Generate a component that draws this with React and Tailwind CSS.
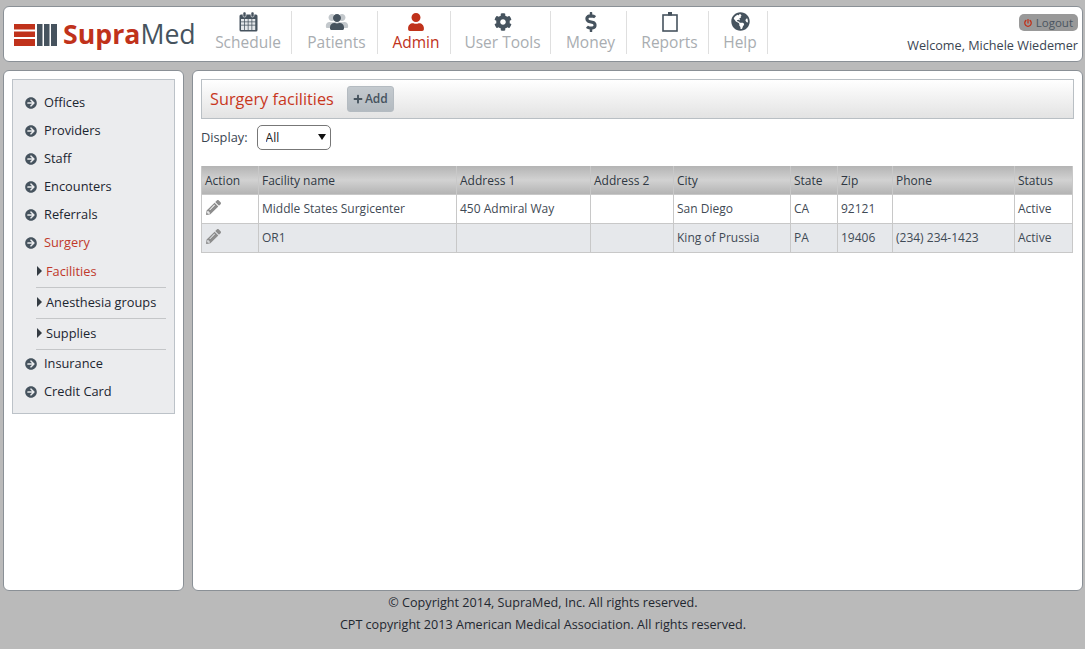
import React from "react";
import {
  FaUser,
  FaCog,
  FaDollarSign,
  FaGlobeAmericas,
  FaArrowCircleRight,
  FaPowerOff,
  FaPencilAlt,
  FaPlus,
} from "react-icons/fa";

const CalendarIcon = () => (
  <svg width="19" height="20" viewBox="0 0 19 20">
    <rect x="0.5" y="2.5" width="18" height="17" rx="1.5" fill="#46535e" />
    <rect x="4" y="0" width="3" height="5" rx="1.2" fill="#46535e" stroke="#fff" strokeWidth="0.6" />
    <rect x="12" y="0" width="3" height="5" rx="1.2" fill="#46535e" stroke="#fff" strokeWidth="0.6" />
    <g fill="#e4e7ea">
      {[7, 10.25, 13.5, 16].map((y) =>
        [2, 5.75, 9.5, 13.25].map((x) => (
          <rect key={`${x}-${y}`} x={x} y={y} width="3" height={y === 16 ? 2 : 2.5} />
        ))
      )}
    </g>
  </svg>
);

const PatientsIcon = () => (
  <span className="relative block w-[24px] h-[19px]">
    <FaUser className="absolute left-0 top-[2px] text-[14px] text-[#c3c8cc]" />
    <FaUser className="absolute right-0 top-[2px] text-[14px] text-[#c3c8cc]" />
    <FaUser className="absolute left-[4px] top-[2px] text-[16px] text-[#46535e]" />
  </span>
);

const ClipboardIcon = () => (
  <svg width="16" height="21" viewBox="0 0 16 21" fill="none">
    <rect x="1" y="4" width="14" height="16" stroke="#46535e" strokeWidth="1.6" />
    <rect x="6" y="1" width="4" height="3.5" fill="#46535e" />
  </svg>
);

const Logo = () => (
  <div className="flex items-center w-[201px] pl-[10px] pt-[1px]">
    <svg width="43" height="22" viewBox="0 0 43 22" className="shrink-0">
      <rect x="0" y="0" width="21" height="5.5" fill="#c0321b" />
      <rect x="0" y="7.5" width="21" height="5.5" fill="#c0321b" />
      <rect x="0" y="15" width="21" height="7" fill="#c0321b" />
      <rect x="23" y="0" width="5.5" height="22" fill="#46535e" />
      <rect x="30" y="0" width="5.5" height="22" fill="#46535e" />
      <rect x="37" y="0" width="6" height="22" fill="#46535e" />
    </svg>
    <span className="ml-[6px] text-[26.7px] leading-none whitespace-nowrap">
      <span className="font-bold text-[#c0321b]">Supra</span>
      <span className="text-[#46535e]">Med</span>
    </span>
  </div>
);

const navItems = [
  { label: "Schedule", width: "w-[91px]", icon: <CalendarIcon /> },
  { label: "Patients", width: "w-[86px]", icon: <PatientsIcon /> },
  { label: "Admin", width: "w-[73px]", active: true, icon: <FaUser className="text-[18px] text-[#c0321b]" /> },
  { label: "User Tools", width: "w-[100px]", icon: <FaCog className="text-[18px] text-[#46535e]" /> },
  { label: "Money", width: "w-[76px]", icon: <FaDollarSign className="text-[20px] text-[#46535e]" /> },
  { label: "Reports", width: "w-[82px]", icon: <ClipboardIcon /> },
  { label: "Help", width: "w-[59px]", icon: <FaGlobeAmericas className="text-[19px] text-[#46535e]" /> },
];

const menuTop = ["Offices", "Providers", "Staff", "Encounters", "Referrals"];
const subMenu = ["Facilities", "Anesthesia groups", "Supplies"];
const menuBottom = ["Insurance", "Credit Card"];

const MenuItem = ({ label, active }) => (
  <div className={`flex items-center h-[28px] pl-[12px] ${active ? "text-[#c0392b]" : "text-[#1c2530]"}`}>
    <FaArrowCircleRight className="text-[12px] text-[#46535e] mr-[7px]" />
    <span>{label}</span>
  </div>
);

const columns = [
  { name: "Action", w: "w-[57px]" },
  { name: "Facility name", w: "w-[198px]" },
  { name: "Address 1", w: "w-[134px]" },
  { name: "Address 2", w: "w-[83px]" },
  { name: "City", w: "w-[117px]" },
  { name: "State", w: "w-[47px]" },
  { name: "Zip", w: "w-[55px]" },
  { name: "Phone", w: "w-[122px]" },
  { name: "Status", w: "w-[58px]" },
];

const rows = [
  ["Middle States Surgicenter", "450 Admiral Way", "", "San Diego", "CA", "92121", "", "Active"],
  ["OR1", "", "", "King of Prussia", "PA", "19406", "(234) 234-1423", "Active"],
];

export default function App() {
  return (
    <div className="h-[649px] bg-[#bababa] pt-[6px] pl-[3px] pr-[2px] text-[12.8px] font-['Open_Sans',sans-serif] overflow-hidden">
      <header className="flex h-[56px] bg-white border border-[#8a9096] rounded-[6px]">
        <Logo />
        <nav className="flex h-[43px] mt-[4px] -ml-[4px]">
          {navItems.map((item) => (
            <div
              key={item.label}
              className={`flex flex-col items-center pl-[4px] border-r border-[#dfdfdf] ${item.width}`}
            >
              <div className="flex items-center justify-center h-[21px]">{item.icon}</div>
              <span className={`text-[15.5px] leading-[21px] whitespace-nowrap ${item.active ? "text-[#c0321b]" : "text-[#a9adb1]"}`}>
                {item.label}
              </span>
            </div>
          ))}
        </nav>
        <div className="flex-1 flex flex-col items-end pt-[7px] pr-[4px]">
          <button className="flex items-center h-[17px] px-[5px] rounded-[5px] bg-[#999999] text-[11.5px] text-[#4a5560]">
            <FaPowerOff className="text-[8px] text-[#c0321b] mr-[4px]" />
            Logout
          </button>
          <div className="mt-[5px] text-[12.65px] text-[#3a4552] leading-[18px] whitespace-nowrap">Welcome, Michele Wiedemer</div>
        </div>
      </header>

      <div className="flex gap-[8px] h-[521px] mt-[8px]">
        <aside className="w-[181px] shrink-0 bg-white border border-[#8a9096] rounded-[6px] pt-[8px] pl-[8px]">
          <div className="w-[163px] h-[335px] bg-[#ebecee] border border-[#bcc2c8] pt-[9px]">
            {menuTop.map((m) => (
              <MenuItem key={m} label={m} />
            ))}
            <MenuItem label="Surgery" active />
            <div className="ml-[23px] mr-[8px]">
              {subMenu.map((s, i) => (
                <div
                  key={s}
                  className={`flex items-center h-[31px] border-b border-[#c4c6c8] ${i === 0 ? "text-[#c0392b]" : "text-[#1c2530]"}`}
                >
                  <svg width="5" height="10" viewBox="0 0 5 10" className="ml-[1px] mr-[4px] -mt-[2px]">
                    <path d="M0 0L5 5L0 10Z" fill="#333b42" />
                  </svg>
                  <span>{s}</span>
                </div>
              ))}
            </div>
            {menuBottom.map((m) => (
              <MenuItem key={m} label={m} />
            ))}
          </div>
        </aside>

        <main className="flex-1 bg-white border border-[#8a9096] rounded-[6px] pt-[8px] px-[8px]">
          <div className="flex items-center h-[40px] w-[873px] border border-[#b9bfc4] bg-gradient-to-b from-white to-[#e3e3e3] pl-[8px]">
            <h1 className="text-[16.25px] text-[#c8371d]">Surgery facilities</h1>
            <button className="flex items-center h-[26px] w-[47px] ml-[13px] justify-center rounded-[3px] border border-[#b4bbc1] bg-gradient-to-b from-[#c4cacf] to-[#b3bac0] text-[12px] font-semibold text-[#46535e]">
              <FaPlus className="text-[10px] mr-[2px]" />
              Add
            </button>
          </div>

          <div className="flex items-center h-[25px] mt-[6px] text-[#3a4552]">
            <span className="mr-[9px]">Display:</span>
            <div className="relative">
              <select
                defaultValue="All"
                className="block appearance-none w-[74px] h-[25px] pl-[8px] border border-[#777] rounded-[5px] bg-white text-[12px] text-[#222]"
              >
                <option>All</option>
              </select>
              <span className="absolute right-[5px] top-[9px] w-0 h-0 border-x-[4px] border-x-transparent border-t-[6px] border-t-[#111] pointer-events-none" />
            </div>
          </div>

          <table className="mt-[16px] w-[872px] table-fixed border-collapse text-[12px] text-[#3f4a55]">
            <thead>
              <tr className="h-[28px] bg-gradient-to-b from-[#b4b4b4] via-[#d2d2d2] to-[#b4b4b4]">
                {columns.map((c) => (
                  <th
                    key={c.name}
                    className={`${c.w} px-[3px] pt-[2px] text-left font-normal text-[#2e3742] border-x border-[#c8c8c8]`}
                  >
                    {c.name}
                  </th>
                ))}
              </tr>
            </thead>
            <tbody>
              {rows.map((row, i) => (
                <tr key={i} className={`h-[29px] ${i % 2 ? "bg-[#e6e8eb]" : "bg-white"}`}>
                  <td className="px-[3px] border border-[#c8c8c8]">
                    <FaPencilAlt className="text-[15px] ml-[1px] -mt-[2px] text-[#8d8d8d]" />
                  </td>
                  {row.map((cell, j) => (
                    <td key={j} className="px-[3px] border border-[#c8c8c8] whitespace-nowrap">
                      {cell}
                    </td>
                  ))}
                </tr>
              ))}
            </tbody>
          </table>
        </main>
      </div>

      <footer className="pt-[1px] text-center text-[12.6px] text-[#1f2730] leading-[22px]">
        <p>© Copyright 2014, SupraMed, Inc. All rights reserved.</p>
        <p>CPT copyright 2013 American Medical Association. All rights reserved.</p>
      </footer>
    </div>
  );
}
